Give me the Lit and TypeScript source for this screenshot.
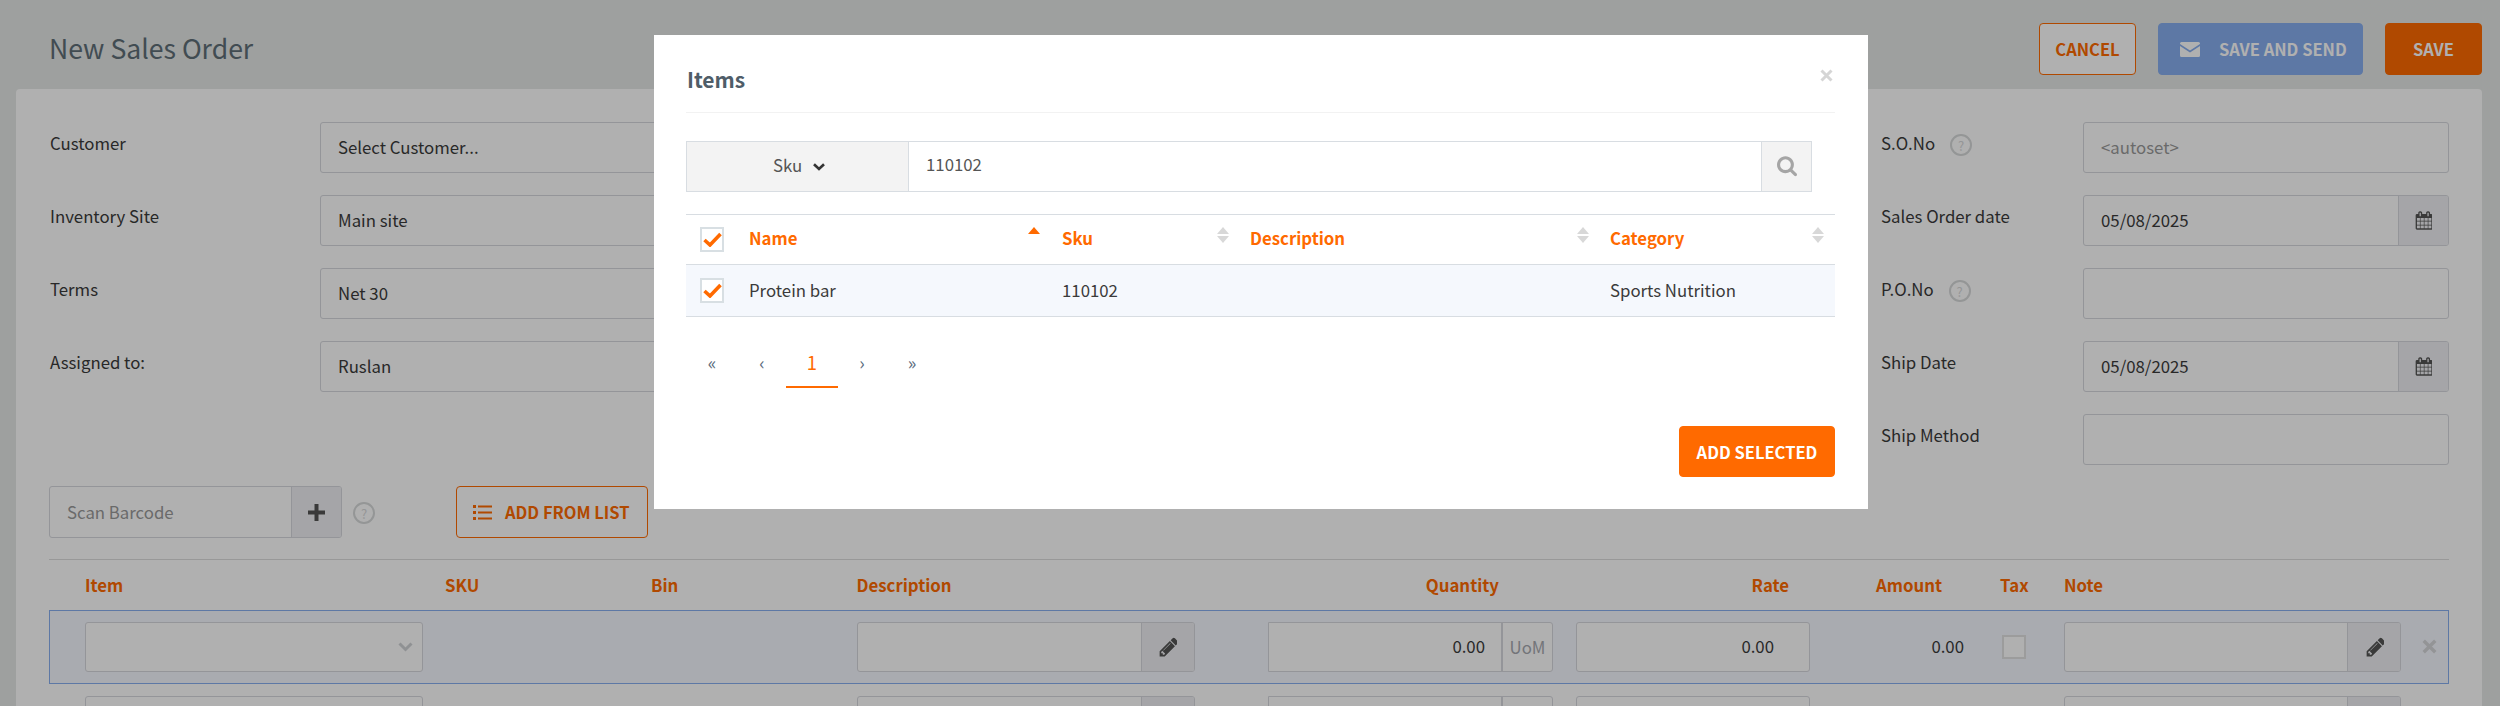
import { LitElement, html, css } from "lit";
import { customElement } from "lit/decorators.js";

const pencil = html`<svg class="ic" width="19" height="22" viewBox="0 0 1536 1792"><path fill="currentColor" d="M491 1536l91-91-235-235-91 91v107h128v128h107zm523-928q0-22-22-22-10 0-17 7l-542 542q-7 7-7 17 0 22 22 22 10 0 17-7l542-542q7-7 7-17zm-54-192l416 416-832 832h-416v-416zm683 96q0 53-37 90l-166 166-416-416 166-165q36-38 90-38 53 0 91 38l235 234q37 39 37 91z"/></svg>`;
const calendar = html`<svg class="ic" width="17" height="19" viewBox="0 0 1664 1792"><path fill="currentColor" d="M192 1664h288v-288h-288v288zm352 0h320v-288h-320v288zm-352-352h288v-320h-288v320zm352 0h320v-320h-320v320zm-352-384h288v-288h-288v288zm736 736h320v-288h-320v288zm-384-736h320v-288h-320v288zm768 736h288v-288h-288v288zm-384-352h320v-320h-320v320zm-352-864v-288q0-13-9.5-22.5t-22.5-9.5h-64q-13 0-22.5 9.5t-9.5 22.5v288q0 13 9.5 22.5t22.5 9.5h64q13 0 22.5-9.5t9.5-22.5zm736 864h288v-320h-288v320zm-384-384h320v-288h-320v288zm384 0h288v-288h-288v288zm32-480v-288q0-13-9.5-22.5t-22.5-9.5h-64q-13 0-22.5 9.5t-9.5 22.5v288q0 13 9.5 22.5t22.5 9.5h64q13 0 22.5-9.5t9.5-22.5zm384-64v1280q0 52-38 90t-90 38h-1408q-52 0-90-38t-38-90v-1280q0-52 38-90t90-38h128v-96q0-66 47-113t113-47h64q66 0 113 47t47 113v96h384v-96q0-66 47-113t113-47h64q66 0 113 47t47 113v96h128q52 0 90 38t38 90z"/></svg>`;
const search = html`<svg class="ic" width="20" height="22" viewBox="0 0 1664 1792"><path fill="currentColor" d="M1152 704q0-185-131.500-316.500t-316.500-131.500-316.500 131.500-131.500 316.500 131.500 316.500 316.500 131.500 316.500-131.500 131.500-316.500zm512 832q0 52-38 90t-90 38q-54 0-90-38l-343-342q-179 124-399 124-143 0-273.500-55.500t-225-150-150-225-55.500-273.500 55.500-273.500 150-225 225-150 273.500-55.500 273.500 55.500 225 150 150 225 55.500 273.500q0 220-124 399l343 343q37 37 37 90z"/></svg>`;
const listIcon = html`<svg class="ic" width="19" height="15" viewBox="0 0 19 15"><g fill="currentColor"><rect x="0" y="0" width="3" height="3"/><rect x="0" y="6" width="3" height="3"/><rect x="0" y="12" width="3" height="3"/><rect x="5" y="0.5" width="14" height="2"/><rect x="5" y="6.500" width="14" height="2"/><rect x="5" y="12.500" width="14" height="2"/></g></svg>`;
const envelope = html`<svg class="ic" width="20" height="15" viewBox="0 0 20 15"><path fill="currentColor" d="M0 1.500A1.500 1.500 0 0 1 1.500 0h17A1.500 1.500 0 0 1 20 1.500v.6l-10 6.500L0 2.100zM0 4l10 6.500L20 4v9.500a1.500 1.500 0 0 1-1.500 1.500h-17A1.500 1.500 0 0 1 0 13.500z"/></svg>`;
const chevron = html`<svg class="ic" width="15" height="10" viewBox="0 0 15 10"><path fill="none" stroke="currentColor" stroke-width="3" d="M1.500 1.500l6 6 6-6"/></svg>`;
const chevronSmall = html`<svg class="ic" width="12" height="8" viewBox="0 0 12 8"><path fill="none" stroke="currentColor" stroke-width="2.600" d="M1 1.200l5 4.800 5-4.800"/></svg>`;
const times = html`<svg class="ic" width="13" height="13" viewBox="0 0 13 13"><path fill="none" stroke="currentColor" stroke-width="3" d="M1.500 1.500l10 10m0-10l-10 10"/></svg>`;
const plus = html`<svg class="ic" width="17" height="17" viewBox="0 0 17 17"><path fill="currentColor" d="M6.500 0h4v6.500H17v4h-6.500V17h-4v-6.500H0v-4h6.500z"/></svg>`;
const check = html`<svg class="ic" width="19" height="15" viewBox="0 0 19 15"><path fill="none" stroke="#ff6a00" stroke-width="3.600" d="M1.500 8l5.500 5L17.500 2"/></svg>`;

const sort = (up: string, down: string) => html`<svg class="sort" width="12" height="16" viewBox="0 0 12 16"><path fill="${up}" d="M6 0l6 7H0z"/><path fill="${down}" d="M0 9h12l-6 7z"/></svg>`;
const help = html`<span class="help">?</span>`;

@customElement("app-root")
export class AppRoot extends LitElement {
  static styles = css`
    :host { display: block; position: relative; width: 2500px; height: 706px; overflow: hidden;
      font-family: "Noto Sans CJK SC", "Source Sans Pro", sans-serif; font-size: 16.800px; color: #3b3b3b; background: #e5e8e6; }
    .ic { display: block; flex: none; }
    .head { display: flex; align-items: flex-start; height: 66px; padding: 23px 18px 0 49px; }
    h1 { margin: 0; flex: 1; font-size: 26.600px; font-weight: 400; line-height: 50px; color: #5f6e78; }
    .btn { display: flex; align-items: center; justify-content: center; box-sizing: border-box; height: 52px;
      border-radius: 4px; font-size: 16.500px; font-weight: 700; color: #fff; background: #ff6a00; border: 1px solid #ff6a00; }
    .btn.outline { background: #fff; color: #ff6a00; }
    .cancel { width: 97px; margin-right: 22px; }
    .send { width: 205px; margin-right: 22px; background: #87aeef; border-color: #87aeef; color: #fff; justify-content: flex-start; padding-left: 21px; gap: 19px; }
    .save { width: 97px; }
    .panel { margin: 0 18px 0 16px; height: 617px; box-sizing: border-box; padding: 33px 33px 0; background: #fff; border-radius: 4px 4px 0 0; }
    .form { display: grid; grid-template-columns: 1fr 568px; }
    .col { display: flex; flex-direction: column; gap: 22px; }
    .field { display: flex; height: 51px; }
    .label { display: flex; align-items: flex-start; gap: 15px; padding-top: 9px; line-height: 24px; box-sizing: border-box; color: #3a3a3a; }
    .left .label { width: 271px; padding-left: 1px; }
    .left .field .box { width: 480px; }
    .right .label { width: 202px; }
    .right .field .box { width: 366px; }
    .help { display: flex; align-items: center; justify-content: center; box-sizing: border-box; width: 22px; height: 22px; margin-top: 3px;
      border: 2px solid #d7d9da; border-radius: 50%; font-size: 13px; line-height: 1; color: #d7d9da; }
    .box { display: flex; box-sizing: border-box; height: 100%; border: 1px solid #d7d8de; border-radius: 3px; background: #fff; overflow: hidden; }
    .val { flex: 1; min-width: 0; display: flex; align-items: center; padding: 0 17px 2px; }
    .val.ph { color: #9a9a9a; }
    .add { display: flex; align-items: center; justify-content: center; flex: none; box-sizing: border-box; width: 50px; background: #eff0f3; border-left: 1px solid #d7d8de; color: #555; }
    .tools { display: flex; align-items: center; height: 52px; margin-top: 21px; }
    .scan { width: 293px; }
    .scan .val { color: #9a9a9a; padding-bottom: 0; }
    .hint { margin: 2px 0 0 11px; }
    .from { width: 192px; margin-left: 81px; justify-content: flex-start; padding-left: 16px; gap: 13px; }
    .hint .help { margin-top: 0; }
    .lines { margin-top: 21px; border-top: 1px solid #dcdcdc; }
    .grid { display: grid; grid-template-columns: 36px 360px 206px 205.500px 411.500px 308px 234px 154px 36px 64px 337px 1fr; }
    .hrow { height: 50px; align-items: center; font-weight: 700; color: #ff6a00; line-height: 20px; padding-bottom: 1px; box-sizing: border-box; }
    .q { padding-right: 77px; text-align: right; }
    .rr { padding-right: 21px; text-align: right; }
    .am { padding-right: 22px; text-align: right; }
    .row { box-sizing: border-box; height: 74px; padding: 11px 0; border: 1px solid transparent; align-items: stretch; grid-template-columns: 35px 360px 206px 205.500px 411.500px 308px 234px 154px 36px 64px 337px 1fr; }
    .row.on { background: #f5f8ff; border-color: #87aeef; }
    .item { width: 338px; display: flex; align-items: center; justify-content: flex-end; padding-right: 9px; color: #d0d2d6; }
    .desc { width: 338px; }
    .desc .add, .note .add { width: 53px; color: #555; }
    .qty { width: 285px; border-radius: 0 3px 3px 0; }
    .qty .val, .rate .val { justify-content: flex-end; padding: 0 16px 2px 0; }
    .qty .add { width: 51px; border-left-width: 2px; background: transparent; color: #a7a9b0; }
    .rate { width: 234px; }
    .rate .val { padding-right: 35px; }
    .amt { display: flex; align-items: center; justify-content: flex-end; padding-bottom: 2px; }
    .tax { display: flex; align-items: center; justify-content: flex-start; padding-left: 2px; }
    .tax i { display: block; box-sizing: border-box; width: 24px; height: 24px; background: #fff; border: 2px solid #e2e2e2; }
    .note { width: 337px; }
    .del { display: flex; align-items: center; justify-content: flex-end; padding-right: 11px; padding-bottom: 2px; color: #d6d7da; }
    .del .ic { width: 15px; height: 15px; }
    .veil { position: absolute; inset: 0; background: rgba(0, 0, 0, .31); }
    .modal { position: absolute; left: 654px; top: 35px; width: 1214px; height: 474px; box-sizing: border-box; padding: 0 33px 0 32px; background: #fff; color: #3b3b3b; }
    .mh { position: relative; height: 77px; border-bottom: 1px solid #f2f2f2; }
    h2 { margin: 0; padding: 30px 0 0 1px; font-size: 21px; line-height: 28px; font-weight: 700; color: #4f5d68; }
    .x { position: absolute; right: 2px; top: 34px; color: #d5d5d5; }
    .sbar { display: flex; width: 1126px; height: 51px; margin-top: 28px; box-sizing: border-box; border: 1px solid #d8dde2; }
    .sel { display: flex; align-items: center; justify-content: center; gap: 11px; width: 222px; padding-left: 3px; box-sizing: border-box; background: #f3f3f3; border-right: 1px solid #d8dde2; color: #555; }
    .sel span { padding-bottom: 3px; }
    .sel .ic { color: #333; }
    .sval { flex: 1; display: flex; align-items: center; padding: 0 0 5px 17px; color: #555; }
    .sbtn { display: flex; align-items: center; justify-content: center; box-sizing: border-box; width: 50px; background: #f3f3f3; border-left: 1px solid #d8dde2; color: #a5a5a5; }
    .table { margin-top: 22px; border-top: 1px solid #d8dde2; }
    .tr { display: grid; grid-template-columns: 63px 313px 188px 360px 1fr; box-sizing: border-box; align-items: center; }
    .tr.h { height: 50px; border-bottom: 1px solid #d8dde2; font-weight: 700; color: #ff6a00; }
    .tr.b { height: 52px; background: #f5f8fd; border-bottom: 1px solid #d8dde2; }
    .tr.b .t { padding-bottom: 2px; }
    .cb { display: flex; align-items: center; justify-content: center; box-sizing: border-box; width: 24px; height: 25px; margin-left: 14px; background: #fff; border: 2px solid #d8dfe3; }
    .th { display: flex; align-items: center; justify-content: space-between; height: 100%; }
    .th span { padding-bottom: 4px; }
    .sort { flex: none; align-self: flex-start; margin-top: 12px; }
    .n1 { padding-right: 22px; } .n2 { padding-right: 21px; } .n3 { padding-right: 21px; } .n4 { padding-right: 11px; }
    .pager { display: flex; margin-top: 27px; margin-left: 1px; }
    .pager span { display: flex; align-items: center; justify-content: center; box-sizing: border-box; width: 50px; height: 44px; padding-bottom: 8px; font-size: 18px; color: #5a6b7c; }
    .pager span.cur { border-bottom: 2px solid #ff6a00; color: #ff6a00; width: 52px; margin: 0 -1px; padding-bottom: 7px; font-size: 18.500px; }
    .foot { display: flex; justify-content: flex-end; margin-top: 38px; }
    .addsel { width: 156px; height: 51px; }
  `;

  private left = [["Customer", "Select Customer..."], ["Inventory Site", "Main site"], ["Terms", "Net 30"], ["Assigned to:", "Ruslan"]];

  private lineRow(on: boolean) {
    return html`<div class="grid row ${on ? "on" : ""}">
      <span></span>
      <div class="box item">${chevron}</div>
      <span></span><span></span>
      <div class="box desc"><div class="val"></div><div class="add">${pencil}</div></div>
      <div class="box qty"><div class="val">${on ? "0.00" : ""}</div><div class="add">${on ? "UoM" : ""}</div></div>
      <div class="box rate"><div class="val">${on ? "0.00" : ""}</div></div>
      <div class="amt">${on ? "0.00" : ""}</div>
      <span></span>
      <div class="tax">${on ? html`<i></i>` : ""}</div>
      <div class="box note"><div class="val"></div><div class="add">${pencil}</div></div>
      <div class="del">${on ? times : ""}</div>
    </div>`;
  }

  render() {
    return html`
      <div class="head">
        <h1>New Sales Order</h1>
        <div class="btn outline cancel">CANCEL</div>
        <div class="btn send">${envelope}<span>SAVE AND SEND</span></div>
        <div class="btn save">SAVE</div>
      </div>
      <div class="panel">
        <div class="form">
          <div class="col left">
            ${this.left.map(([l, v]) => html`<div class="field"><div class="label">${l}</div><div class="box"><div class="val">${v}</div></div></div>`)}
          </div>
          <div class="col right">
            <div class="field"><div class="label">S.O.No ${help}</div><div class="box"><div class="val ph">&lt;autoset&gt;</div></div></div>
            <div class="field"><div class="label">Sales Order date</div><div class="box"><div class="val">05/08/2025</div><div class="add">${calendar}</div></div></div>
            <div class="field"><div class="label">P.O.No ${help}</div><div class="box"><div class="val"></div></div></div>
            <div class="field"><div class="label">Ship Date</div><div class="box"><div class="val">05/08/2025</div><div class="add">${calendar}</div></div></div>
            <div class="field"><div class="label">Ship Method</div><div class="box"><div class="val"></div></div></div>
          </div>
        </div>
        <div class="tools">
          <div class="box scan"><div class="val">Scan Barcode</div><div class="add">${plus}</div></div>
          <span class="hint">${help}</span>
          <div class="btn outline from">${listIcon}<span>ADD FROM LIST</span></div>
        </div>
        <div class="lines">
          <div class="grid hrow">
            <span></span><span>Item</span><span>SKU</span><span>Bin</span><span>Description</span>
            <span class="q">Quantity</span><span class="rr">Rate</span><span class="am">Amount</span><span></span>
            <span>Tax</span><span>Note</span><span></span>
          </div>
          ${this.lineRow(true)}
          ${this.lineRow(false)}
        </div>
      </div>
      <div class="veil"></div>
      <div class="modal">
        <div class="mh"><h2>Items</h2><div class="x">${times}</div></div>
        <div class="sbar">
          <div class="sel"><span>Sku</span>${chevronSmall}</div>
          <div class="sval">110102</div>
          <div class="sbtn">${search}</div>
        </div>
        <div class="table">
          <div class="tr h">
            <div class="cb">${check}</div>
            <div class="th n1"><span>Name</span>${sort("#ff6a00", "transparent")}</div>
            <div class="th n2"><span>Sku</span>${sort("#d8d8d8", "#d8d8d8")}</div>
            <div class="th n3"><span>Description</span>${sort("#d8d8d8", "#d8d8d8")}</div>
            <div class="th n4"><span>Category</span>${sort("#d8d8d8", "#d8d8d8")}</div>
          </div>
          <div class="tr b">
            <div class="cb">${check}</div>
            <div class="t">Protein bar</div><div class="t">110102</div><div></div><div class="t">Sports Nutrition</div>
          </div>
        </div>
        <div class="pager"><span>«</span><span>‹</span><span class="cur">1</span><span>›</span><span>»</span></div>
        <div class="foot"><div class="btn addsel">ADD SELECTED</div></div>
      </div>`;
  }
}
